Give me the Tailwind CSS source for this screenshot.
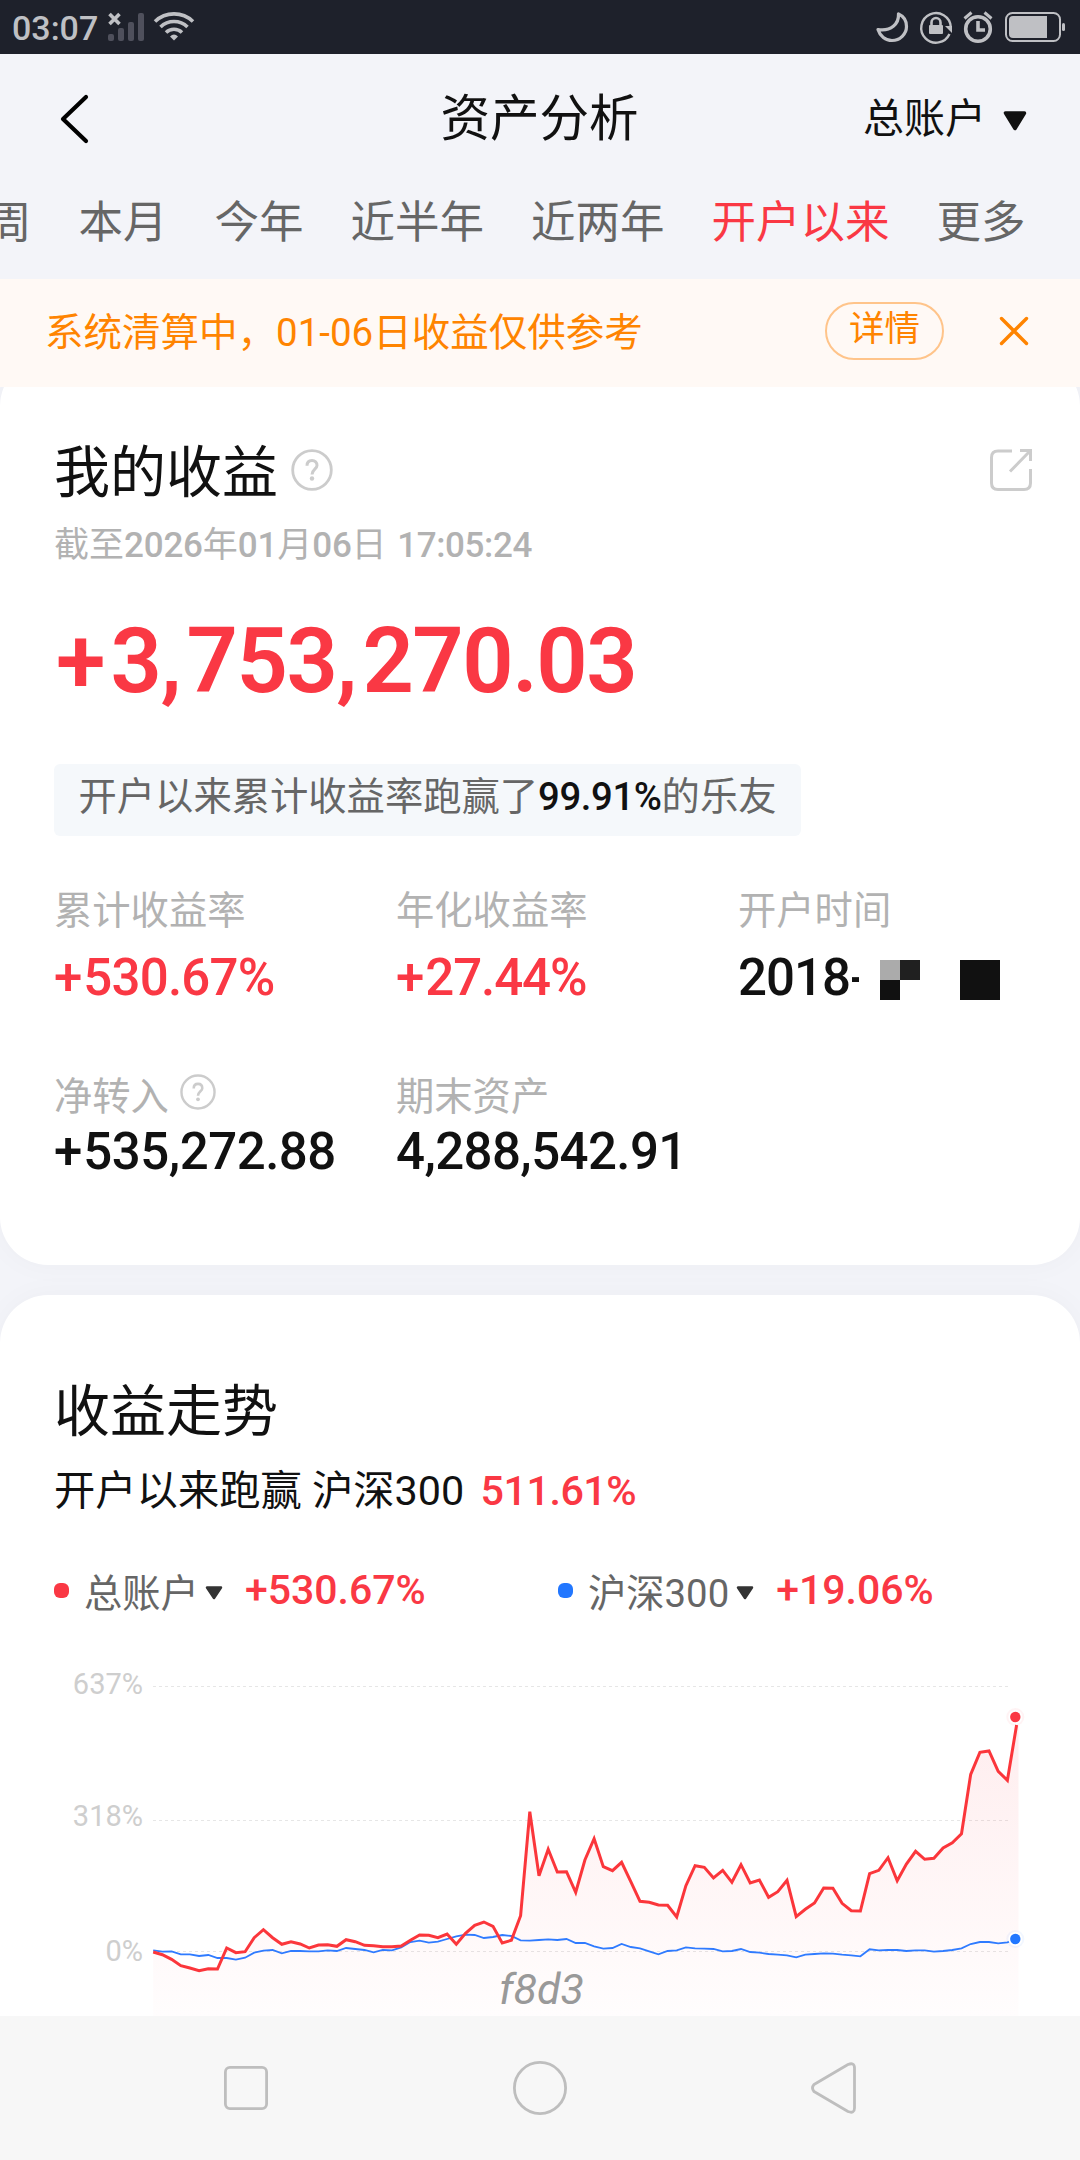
<!DOCTYPE html>
<html lang="zh-CN">
<head>
    <meta charset="UTF-8">
    <meta name="viewport" content="width=device-width, initial-scale=1.0">
    <title>资产分析</title>
    <script src="https://cdn.jsdelivr.net/npm/@tailwindcss/browser@4"></script>
    <style>
        body {
            font-family: Roboto, 'Noto Sans CJK SC', sans-serif;
        }
    </style>
</head>
<body class="bg-[#f3f4f9] text-[#111] w-[1080px] h-[2160px] overflow-hidden flex flex-col whitespace-nowrap">

    <!-- Status bar -->
    <div class="h-[54px] shrink-0 bg-[#1e212b] flex items-center justify-between pl-[12px] pr-[15px]">
        <div class="flex items-center">
            <span class="text-[34px] leading-[54px] font-medium text-[#bfc0c4] w-[95px] pt-[2px]">03:07</span>
            <svg width="90" height="54" viewBox="107 0 90 54" fill="none">
                <path d="M109.500 14L119.500 24M119.500 14L109.500 24" stroke="#bfc0c4" stroke-width="3.600"/>
                <g fill="#4f505c">
                    <rect x="108" y="34" width="6" height="7" rx="2"/>
                    <rect x="118" y="28" width="6" height="13" rx="2"/>
                    <rect x="128" y="22" width="6" height="19" rx="2"/>
                    <rect x="138" y="13" width="6" height="28" rx="2"/>
                </g>
                <g stroke="#bfc0c4" stroke-width="3.600">
                    <path d="M155 21.500A27.500 27.500 0 0 1 193 21.500"/>
                    <path d="M160.500 27A19.500 19.500 0 0 1 187.500 27"/>
                    <path d="M166 32.500A11.500 11.500 0 0 1 182 32.500"/>
                </g>
                <path d="M170 36.500Q174 32.500 178 36.500L174 40.500Z" fill="#bfc0c4"/>
            </svg>
        </div>
        <svg width="192" height="54" viewBox="873 0 192 54" fill="none">
            <path d="M898.500 14C899 24 891 31.500 878 29.500C880 36 885.500 40.500 892 40.500C900 40.500 906.500 34 906.500 26.500C906.500 20.500 903 16 898.500 14Z" stroke="#bfc0c4" stroke-width="3.200" stroke-linejoin="round"/>
            <g stroke="#bfc0c4" stroke-width="2.400">
                <path d="M949.500 34A14.800 14.800 0 1 1 950.800 27"/>
                <path d="M931.500 26V22.500A4.500 4.500 0 0 1 940.500 22.500V26" stroke-width="2.600"/>
            </g>
            <rect x="929" y="25" width="14" height="9" rx="1" fill="#bfc0c4"/>
            <path d="M945 26H952V33Z" fill="#bfc0c4"/>
            <circle cx="978" cy="29" r="12.300" stroke="#bfc0c4" stroke-width="3.600"/>
            <path d="M978 21V30H985" stroke="#bfc0c4" stroke-width="3.600"/>
            <path d="M964.500 18.500L971.500 12.500M991.500 18.500L984.500 12.500" stroke="#bfc0c4" stroke-width="3"/>
            <rect x="1006" y="13" width="54" height="28" rx="6.500" stroke="#bfc0c4" stroke-width="2"/>
            <path d="M1013 16H1047V38H1013Q1009 38 1009 34V20Q1009 16 1013 16Z" fill="#bfc0c4"/>
            <rect x="1062" y="23" width="3" height="8" rx="1.500" fill="#bfc0c4"/>
        </svg>
    </div>

    <!-- Header -->
    <header class="h-[130px] shrink-0 grid grid-cols-3 items-center pl-[56px] pr-[53px]">
        <svg width="34" height="54" viewBox="56 93 34 54" fill="none" stroke="#000" stroke-width="4.200" stroke-linecap="round" stroke-linejoin="round">
            <path d="M86 98L63 120L86 142"/>
        </svg>
        <h1 class="text-[49.500px] leading-[60px] text-center -ml-[4px]">资产分析</h1>
        <div class="flex items-center justify-end gap-[17px]">
            <span class="text-[41px] leading-[60px]">总账户</span>
            <svg width="24" height="20" viewBox="0 0 24 20" class="mt-[3px]"><path d="M2.500 2H21.500L12 17.500Z" fill="#111" stroke="#111" stroke-width="3.500" stroke-linejoin="round"/></svg>
        </div>
    </header>

    <!-- Period tabs -->
    <nav class="h-[95px] shrink-0 flex gap-[47px] text-[44.500px] leading-[78px] text-[#666] -ml-[57.500px]">
        <span>本周</span>
        <span>本月</span>
        <span>今年</span>
        <span>近半年</span>
        <span>近两年</span>
        <span class="text-[#fa3844]">开户以来</span>
        <span>更多</span>
    </nav>

    <!-- Settlement notice -->
    <div class="relative z-10 h-[108px] shrink-0 bg-[#fff9f5] text-[#ff8400] flex items-center pl-[45px] pr-[51px]">
        <span class="text-[38.500px] leading-[60px]">系统清算中，01-06日收益仅供参考</span>
        <span class="ml-auto w-[119px] h-[58px] rounded-full border-2 border-[#ffc48a] text-[35.500px] leading-[51px] text-center -mt-[4px]">详情</span>
        <svg width="30" height="30" viewBox="0 0 30 30" class="ml-[55px] -mt-[5px]" fill="none" stroke="#ff8400" stroke-width="3.400" stroke-linecap="round"><path d="M2.500 2.500L27.500 27.500M27.500 2.500L2.500 27.500"/></svg>
    </div>

    <!-- My profit -->
    <section class="h-[907px] -mt-[29px] shrink-0 bg-white rounded-[48px] shadow-[0_0_30px_rgba(0,0,0,0.030)] px-[54px] pt-[83px]">
        <div class="flex items-center h-[64px]">
            <h2 class="text-[56px] leading-[64px]">我的收益</h2>
            <svg width="42" height="42" viewBox="0 0 42 42" class="ml-[13px] -mt-[6px]" fill="none" stroke="#ccc" stroke-width="2.800">
                <circle cx="21" cy="21" r="19.300"/>
                <path d="M16 16.800C16 13.500 18 11.500 21 11.500S26 13.500 26 16.500C26 20 21 20.500 21 25.500" stroke-width="3"/>
                <circle cx="21" cy="29.500" r="2.200" fill="#ccc" stroke="none"/>
            </svg>
            <svg width="42" height="42" viewBox="0 0 42 42" class="ml-auto -mr-[6px] -mt-[6px]" fill="none" stroke="#ccc" stroke-width="3">
                <path d="M22 2H8Q1.500 2 1.500 8.500V34Q1.500 40.500 8 40.500H34Q40.500 40.500 40.500 34V20"/>
                <path d="M30 1.500H40.500V12M40 2L20 22.500"/>
            </svg>
        </div>
        <p class="mt-[7px] text-[35px] leading-[68px] text-[#b2b2b2]">截至<span class="font-medium tracking-[-0.200px]">2026</span>年<span class="font-medium tracking-[-0.200px]">01</span>月<span class="font-medium tracking-[-0.200px]">06</span>日 <span class="ml-[2px] font-medium tracking-[-0.400px]">17:05:24</span></p>
        <p class="mt-[32px] pl-[2px] text-[90px] leading-[100px] font-semibold text-[#fa3844] tracking-[-1.500px]"><span class="tracking-[5px]">+</span>3<span class="tracking-[5px]">,</span>753<span class="tracking-[5px]">,</span>270.03</p>
        <div class="mt-[52px] w-[747px] h-[72px] bg-[#f5f8fb] rounded-[6px] pl-[24.500px] text-[38.300px] leading-[66px] text-[#666]">开户以来累计收益率跑赢了<span class="font-medium text-[#111] tracking-[-0.400px]">99.91%</span>的乐友</div>

        <div class="mt-[50px] grid grid-cols-[342px_342px_1fr]">
            <div>
                <p class="text-[38.300px] leading-[50px] text-[#b2b2b2]">累计收益率</p>
                <p class="mt-[12px] text-[51px] leading-[60px] font-medium text-[#fa3844] tracking-[-0.800px]"><span class="tracking-[1px]">+</span>530.67%</p>
            </div>
            <div>
                <p class="text-[38.300px] leading-[50px] text-[#b2b2b2]">年化收益率</p>
                <p class="mt-[12px] text-[51px] leading-[60px] font-medium text-[#fa3844] tracking-[-1.100px]"><span class="tracking-[1px]">+</span>27.44%</p>
            </div>
            <div>
                <p class="text-[38.300px] leading-[50px] text-[#b2b2b2]">开户时间</p>
                <div class="mt-[12px] flex items-center text-[51px] leading-[60px] font-medium tracking-[-1px]">
                    <span>2018</span><span class="w-[9px] overflow-hidden">-</span>
                    <svg width="120" height="40" viewBox="0 0 120 40" class="ml-[21px] mt-[4px]">
                        <rect width="20" height="20" fill="#ababab"/>
                        <rect x="20" width="20" height="20" fill="#202020"/>
                        <rect y="20" width="20" height="20" fill="#111"/>
                        <rect x="80" width="40" height="40" fill="#111"/>
                    </svg>
                </div>
            </div>
            <div class="mt-[64px]">
                <p class="flex items-center text-[38.300px] leading-[50px] text-[#b2b2b2]">净转入
                    <svg width="36" height="36" viewBox="0 0 42 42" class="ml-[11px] -mt-[11px]" fill="none" stroke="#ccc" stroke-width="2.800">
                        <circle cx="21" cy="21" r="19.300"/>
                        <path d="M16 16.800C16 13.500 18 11.500 21 11.500S26 13.500 26 16.500C26 20 21 20.500 21 25.500" stroke-width="3"/>
                        <circle cx="21" cy="29.500" r="2.200" fill="#ccc" stroke="none"/>
                    </svg>
                </p>
                <p class="text-[51px] leading-[60px] font-medium tracking-[-0.500px]"><span class="tracking-[1px]">+</span>535,272.88</p>
            </div>
            <div class="mt-[64px]">
                <p class="text-[38.300px] leading-[50px] text-[#b2b2b2]">期末资产</p>
                <p class="text-[51px] leading-[60px] font-medium tracking-[-0.600px]">4,288,542.91</p>
            </div>
        </div>
    </section>

    <!-- Profit trend -->
    <section class="relative mt-[30px] h-[721px] shrink-0 bg-white rounded-t-[48px] shadow-[0_0_30px_rgba(0,0,0,0.030)] overflow-hidden">
        <div class="px-[54px] pt-[84px]">
            <h2 class="text-[56px] leading-[66px]">收益走势</h2>
            <p class="mt-[16px] text-[41.300px] leading-[60px]">开户以来跑赢 沪深300 <span class="ml-[6px] font-medium text-[#fa3844] tracking-[-0.500px]">511.61%</span></p>
            <div class="mt-[43px] h-[60px] flex text-[38.300px] leading-[60px] text-[#666]">
                <div class="w-[504px] flex items-center">
                    <i class="w-[15px] h-[15px] rounded-[6px] bg-[#fa3844] -mt-[8px]"></i>
                    <span class="ml-[15px]">总账户</span>
                    <svg width="18" height="14" viewBox="0 0 18 14" class="ml-[6px] -mt-[3px]"><path d="M2 1.500H16L9 12Z" fill="#333" stroke="#333" stroke-width="2.500" stroke-linejoin="round"/></svg>
                    <span class="ml-[22px] -mt-[9px] text-[41px] font-medium text-[#fa3844]">+530.67%</span>
                </div>
                <div class="flex items-center">
                    <i class="w-[15px] h-[15px] rounded-[6px] bg-[#2277ff] -mt-[8px]"></i>
                    <span class="ml-[15px]">沪深300</span>
                    <svg width="18" height="14" viewBox="0 0 18 14" class="ml-[7px] -mt-[3px]"><path d="M2 1.500H16L9 12Z" fill="#333" stroke="#333" stroke-width="2.500" stroke-linejoin="round"/></svg>
                    <span class="ml-[22px] -mt-[9px] text-[41px] font-medium text-[#fa3844]">+19.06%</span>
                </div>
            </div>
        </div>

        <svg width="1080" height="356" viewBox="0 0 1080 356" class="mt-[36px]" fill="none">
            <defs>
                <linearGradient id="areaFill" gradientUnits="userSpaceOnUse" x1="0" y1="60" x2="0" y2="356">
                    <stop offset="0" stop-color="#fa3844" stop-opacity="0.090"/>
                    <stop offset="1" stop-color="#fa3844" stop-opacity="0.010"/>
                </linearGradient>
            </defs>
            <g stroke="#e6e6e6" stroke-dasharray="3 3">
                <path d="M153 26.500H1008"/>
                <path d="M153 160.500H1008"/>
                <path d="M153 291.500H1008"/>
            </g>
            <g fill="#cecece" font-size="29" text-anchor="end">
                <text x="143" y="34">637%</text>
                <text x="143" y="166">318%</text>
                <text x="143" y="301">0%</text>
            </g>
            <path id="area" fill="url(#areaFill)"/>
            <path id="index-line" stroke="#2f7bff" stroke-width="1.800"/>
            <path id="account-line" stroke="#fb363b" stroke-width="3"/>
            <circle cx="1015.300" cy="57" r="9" fill="#fa3844" fill-opacity="0.060"/>
            <circle cx="1015.300" cy="57" r="7" fill="#fff"/>
            <circle cx="1015.300" cy="57" r="5.200" fill="#fa3844"/>
            <circle cx="1015.300" cy="279" r="9" fill="#2277ff" fill-opacity="0.060"/>
            <circle cx="1015.300" cy="279" r="7" fill="#fff"/>
            <circle cx="1015.300" cy="279" r="5.200" fill="#2277ff"/>
            <text x="499" y="343.500" font-size="43" font-style="italic" fill="#999">f8d3</text>
        </svg>
    </section>

    <!-- System navigation -->
    <div class="relative h-[144px] shrink-0 bg-[#f7f7f7] flex items-center justify-between pl-[224px] pr-[223px]">
        <svg width="44" height="44" viewBox="0 0 44 44" fill="none" stroke="#bebebe" stroke-width="2.800"><rect x="1.400" y="1.400" width="41.200" height="41.200" rx="4.500"/></svg>
        <svg width="54" height="54" viewBox="0 0 54 54" fill="none" stroke="#bebebe" stroke-width="2.800" class="ml-[1px]"><circle cx="27" cy="27" r="25.600"/></svg>
        <svg width="46" height="52" viewBox="0 0 46 52" fill="none" stroke="#bebebe" stroke-width="2.800" stroke-linejoin="round"><path d="M3 22.500L37 2.500Q43.500 0 43.500 6V46Q43.500 52 37 49.500L3 29.500Q0 26 3 22.500Z"/></svg>
    </div>

    <script>
        // y positions of both series, in thirds of a pixel from the chart's top
        const account = [
            876, 884, 898, 917, 924, 932, 926, 927, 864, 878, 875, 833, 809, 833, 853, 845, 852, 864, 855, 854,
            859, 839, 845, 856, 857, 860, 860, 858, 841, 825, 826, 833, 822, 853, 820, 796, 786, 799, 849, 841,
            767, 455, 647, 568, 636, 635, 697, 600, 536, 620, 632, 607, 665, 724, 727, 735, 736, 771, 677, 617,
            622, 654, 631, 667, 614, 669, 660, 712, 695, 661, 770, 748, 729, 684, 685, 730, 752, 753, 641, 631,
            593, 662, 612, 574, 598, 595, 564, 548, 521, 343, 277, 273, 334, 361, 195
        ];
        const index = [
            871, 875, 874, 883, 883, 888, 885, 894, 894, 899, 893, 878, 872, 870, 880, 873, 873, 874, 874, 871,
            873, 864, 867, 870, 877, 870, 871, 862, 846, 842, 848, 845, 837, 829, 824, 825, 834, 831, 825, 828,
            841, 842, 840, 838, 840, 837, 849, 849, 859, 866, 864, 852, 861, 865, 874, 883, 873, 871, 862, 865,
            866, 867, 874, 873, 867, 876, 878, 882, 884, 886, 892, 884, 882, 880, 881, 884, 886, 889, 868, 871,
            870, 870, 873, 871, 871, 875, 873, 870, 865, 852, 846, 846, 850, 847, 837
        ];

        function linePath(values) {
            return 'M' + values.map((v, i) => `${(153.2 + i * 9.185).toFixed(1)} ${(v / 3).toFixed(1)}`).join('L');
        }

        document.getElementById('account-line').setAttribute('d', linePath(account));
        document.getElementById('index-line').setAttribute('d', linePath(index));
        document.getElementById('area').setAttribute('d', linePath(account) + 'L1018.5 65V356H153.2Z');
    </script>

</body>
</html>
